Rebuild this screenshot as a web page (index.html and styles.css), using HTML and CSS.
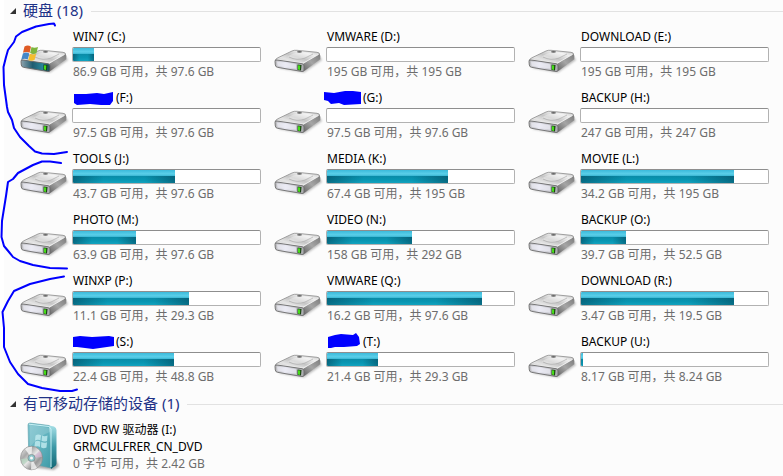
FILE: index.html
```html
<!DOCTYPE html>
<html lang="zh-CN">
<head>
<meta charset="utf-8">
<meta name="viewport" content="width=device-width, initial-scale=1">
<title>计算机</title>
<link rel="stylesheet" href="styles.css">
</head>
<body>
<svg class="defs" aria-hidden="true">
  <defs>
    <linearGradient id="top" x1="0" y1="1" x2="1" y2="0"><stop offset="0" stop-color="#b4b4b4"/><stop offset=".3" stop-color="#e4e4e4"/><stop offset=".5" stop-color="#c6c6c6"/><stop offset=".75" stop-color="#eeeeee"/><stop offset="1" stop-color="#bdbdbd"/></linearGradient>
    <linearGradient id="front" x1="0" y1="0" x2="1" y2="0"><stop offset="0" stop-color="#b8b8bb"/><stop offset=".35" stop-color="#e8e8f2"/><stop offset="1" stop-color="#a9a9ad"/></linearGradient>
    <linearGradient id="teal" x1="0" y1="0" x2="1" y2="0"><stop offset="0" stop-color="#8fa3ad"/><stop offset=".4" stop-color="#1f5c70"/><stop offset=".75" stop-color="#27869a"/><stop offset="1" stop-color="#1c4650"/></linearGradient>
    <linearGradient id="side" x1="0" y1="1" x2="1" y2="0"><stop offset="0" stop-color="#606060"/><stop offset=".5" stop-color="#a5a5a5"/><stop offset="1" stop-color="#7c7c7c"/></linearGradient>
    <linearGradient id="box" x1="0" y1="0" x2="1" y2="1"><stop offset="0" stop-color="#7fc4cf"/><stop offset=".5" stop-color="#63b4c0"/><stop offset="1" stop-color="#3e9aa6"/></linearGradient>
    <linearGradient id="spine" x1="0" y1="0" x2="0" y2="1"><stop offset="0" stop-color="#a5dfe6"/><stop offset=".5" stop-color="#3c98a6"/><stop offset="1" stop-color="#126674"/></linearGradient>
    <linearGradient id="disc" x1="0" y1="0" x2="1" y2="1"><stop offset="0" stop-color="#f4f4f4"/><stop offset=".3" stop-color="#a9a9a9"/><stop offset=".5" stop-color="#e6e6e6"/><stop offset=".7" stop-color="#989898"/><stop offset="1" stop-color="#e9e9e9"/></linearGradient>
    <filter id="soft" x="-20%" y="-50%" width="140%" height="200%"><feGaussianBlur stdDeviation="1"/></filter>
  </defs>
  <symbol id="case" viewBox="4 9 50 26">
    <path d="M8 29 34 33.500 52 21 50 18Z" fill="#777" opacity=".5" filter="url(#soft)"/>
    <path d="M5 21.500Q5.500 20 8 18.700L22 12Q24 11 27 11.300L47 13.300Q50 13.700 49.500 15.500L34 25Z" fill="url(#top)" stroke="#8c8c8c" stroke-width=".8"/>
    <path d="M34 24.500 49.700 15Q51 17 50.300 20.200L35 31.500Q33.500 32.500 32.500 32.300Z" fill="url(#side)"/>
    <path d="M18 17.500Q24 13 30 13.500L43 14.500Q37 19 31 20.500Q24 20.500 18 17.500Z" fill="#fff" opacity=".35"/>
    <path d="M19 18Q27 22 35 19L43 15" fill="none" stroke="#a2a2a2" stroke-width=".6"/>
    <ellipse cx="29.500" cy="12.800" rx="2.500" ry=".9" fill="#666"/>
    <path d="M7 20.500 33 24.200 48.500 15.500" fill="none" stroke="#f4f4f4" stroke-width=".8"/>
  </symbol>
  <symbol id="led" viewBox="4 9 50 26">
    <path d="M27.500 25.500 31.500 26 31 31.500 27.500 31Z" fill="#173b10"/>
    <path d="M28 26.200 30.300 26.400 30 30.900 28 30.500Z" fill="#45dc18"/>
  </symbol>
  <symbol id="drive" viewBox="4 9 50 26">
    <use href="#case" x="4" y="9" width="50" height="26"/>
    <path d="M5 22.500Q5 20.700 7 21L32 24.700Q34 25 34 27V31Q34 32.800 32 32.500L7.500 28.300Q5.500 28 5.300 26Z" fill="url(#front)" stroke="#6c6c6c" stroke-width=".9"/>
    <path d="M7 22.500 26 25.300 26 29.700 7.500 26.700Z" fill="#ececf5" opacity=".7"/>
    <use href="#led" x="4" y="9" width="50" height="26"/>
  </symbol>
  <symbol id="drive-win" viewBox="4 5 50 30">
    <use href="#case" x="4" y="9" width="50" height="26"/>
    <path d="M5 22.500Q5 20.700 7 21L32 24.700Q34 25 34 27V31Q34 32.800 32 32.500L7.500 28.300Q5.500 28 5.300 26Z" fill="url(#teal)" stroke="#666" stroke-width=".9"/>
    <use href="#led" x="4" y="9" width="50" height="26"/>
    <path d="M8.500 7.500Q12 5.500 15 7.700L13.600 13.800Q10.500 12.200 7 13.800Z" fill="#df5b25"/>
    <path d="M15.500 8Q18.500 9.500 22 8L20.400 14.200Q17 15.700 14.100 14.100Z" fill="#7db53b"/>
    <path d="M6.900 14.400Q10.200 12.700 13.300 14.400L11.700 20.500Q8.500 18.800 5.300 20.500Z" fill="#4387c9"/>
    <path d="M13.900 14.700Q16.900 16.200 20.200 14.800L18.500 21Q15.300 22.500 12.200 20.900Z" fill="#f4bd2e"/>
  </symbol>
  <symbol id="dvd" viewBox="0 0 40 50">
    <path d="M10 45 34 48 39 44 35 36Z" fill="#555" opacity=".5" filter="url(#soft)"/>
    <path d="M8 3Q8 1 10 1L29 3.500Q31 4 31 6L31 46 9 41Z" fill="url(#box)" stroke="#5b9ca7" stroke-width=".6"/>
    <path d="M29 3.500 34 4.500Q36.500 5.500 36.500 8V41.500Q36.500 43.500 34.500 44.500L31 47Z" fill="url(#spine)"/>
    <path d="M9 2.200 29 4.500 31 7V45" fill="none" stroke="#c8f1f5" stroke-width="1"/>
    <path d="M10 3 30 6V10Q20 13 10 25Z" fill="#fff" opacity=".15"/>
    <path d="M15.500 13.500 Q18 11.500 21 13.200L20.500 18.500Q18 17 15 18.500ZM22 13.500Q24.500 15 27.500 13.500L27 19Q24 20.200 21.500 18.800ZM15 19.700Q18 18 20.300 19.700L20 25Q17.500 23.500 14.400 25ZM21.300 20Q24 21.500 27 20.200L26.500 25.500Q23.500 27 21 25.300Z" fill="#bde9ed" opacity=".85"/>
    <ellipse cx="11.500" cy="36" rx="11" ry="11.800" fill="url(#disc)" stroke="#858585" stroke-width=".6"/>
    <path d="M11.500 36 5 27Q8 24.500 12 24.700Z" fill="#fff" opacity=".7"/>
    <path d="M11.500 36 20 29Q22 32 22 35Z" fill="#d9b6d7" opacity=".6"/>
    <path d="M11.500 36 3 43Q1.500 40 1 37Z" fill="#b6d9c2" opacity=".7"/>
    <path d="M11.500 36 17 46Q14 48 11 47.300Z" fill="#fff" opacity=".7"/>
    <circle cx="11.500" cy="36" r="3.600" fill="#8dc7cc" stroke="#777" stroke-width=".6"/>
    <circle cx="11.500" cy="36" r="1.500" fill="#f8f8f8"/>
  </symbol>
</svg>

<main class="explorer">
  <section>
    <h2 class="group"><svg class="arrow" viewBox="0 0 6 6" aria-hidden="true"><path d="M6 0V6H0Z"/></svg><span>硬盘 (18)</span></h2>
    <ul class="grid">
      <li class="item"><svg class="icon icon-win" aria-hidden="true"><use href="#drive-win"/></svg><div class="info"><p class="name">WIN7 (C:)</p><div class="bar"><div class="fill" style="width:11%"></div></div><p class="space">86.9 GB 可用，共 97.6 GB</p></div></li>
      <li class="item"><svg class="icon" aria-hidden="true"><use href="#drive"/></svg><div class="info"><p class="name">VMWARE (D:)</p><div class="bar"></div><p class="space">195 GB 可用，共 195 GB</p></div></li>
      <li class="item"><svg class="icon" aria-hidden="true"><use href="#drive"/></svg><div class="info"><p class="name">DOWNLOAD (E:)</p><div class="bar"></div><p class="space">195 GB 可用，共 195 GB</p></div></li>

      <li class="item"><svg class="icon" aria-hidden="true"><use href="#drive"/></svg><div class="info"><p class="name"><svg class="ink" viewBox="0 0 40 14" aria-hidden="true"><path d="M1 2 13 2 24 1 31 2 40 0 40 9 37 13 28 13 17 12 4 13 1 11Z"/></svg>(F:)</p><div class="bar"></div><p class="space">97.5 GB 可用，共 97.6 GB</p></div></li>
      <li class="item"><svg class="icon" aria-hidden="true"><use href="#drive"/></svg><div class="info"><p class="name"><svg class="ink ink-short" viewBox="0 0 33 14" aria-hidden="true"><path d="M-3 0 7 1 18 -1 26 -1 34 0 34 12 17 13 12 11 4 12 1 9 -3 8Z"/></svg>(G:)</p><div class="bar"></div><p class="space">97.5 GB 可用，共 97.6 GB</p></div></li>
      <li class="item"><svg class="icon" aria-hidden="true"><use href="#drive"/></svg><div class="info"><p class="name">BACKUP (H:)</p><div class="bar"></div><p class="space">247 GB 可用，共 247 GB</p></div></li>

      <li class="item"><svg class="icon" aria-hidden="true"><use href="#drive"/></svg><div class="info"><p class="name">TOOLS (J:)</p><div class="bar"><div class="fill" style="width:54.500%"></div></div><p class="space">43.7 GB 可用，共 97.6 GB</p></div></li>
      <li class="item"><svg class="icon" aria-hidden="true"><use href="#drive"/></svg><div class="info"><p class="name">MEDIA (K:)</p><div class="bar"><div class="fill" style="width:64.500%"></div></div><p class="space">67.4 GB 可用，共 195 GB</p></div></li>
      <li class="item"><svg class="icon" aria-hidden="true"><use href="#drive"/></svg><div class="info"><p class="name">MOVIE (L:)</p><div class="bar"><div class="fill" style="width:82%"></div></div><p class="space">34.2 GB 可用，共 195 GB</p></div></li>

      <li class="item"><svg class="icon" aria-hidden="true"><use href="#drive"/></svg><div class="info"><p class="name">PHOTO (M:)</p><div class="bar"><div class="fill" style="width:33.500%"></div></div><p class="space">63.9 GB 可用，共 97.6 GB</p></div></li>
      <li class="item"><svg class="icon" aria-hidden="true"><use href="#drive"/></svg><div class="info"><p class="name">VIDEO (N:)</p><div class="bar"><div class="fill" style="width:45.500%"></div></div><p class="space">158 GB 可用，共 292 GB</p></div></li>
      <li class="item"><svg class="icon" aria-hidden="true"><use href="#drive"/></svg><div class="info"><p class="name">BACKUP (O:)</p><div class="bar"><div class="fill" style="width:24%"></div></div><p class="space">39.7 GB 可用，共 52.5 GB</p></div></li>

      <li class="item"><svg class="icon" aria-hidden="true"><use href="#drive"/></svg><div class="info"><p class="name">WINXP (P:)</p><div class="bar"><div class="fill" style="width:62%"></div></div><p class="space">11.1 GB 可用，共 29.3 GB</p></div></li>
      <li class="item"><svg class="icon" aria-hidden="true"><use href="#drive"/></svg><div class="info"><p class="name">VMWARE (Q:)</p><div class="bar"><div class="fill" style="width:83%"></div></div><p class="space">16.2 GB 可用，共 97.6 GB</p></div></li>
      <li class="item"><svg class="icon" aria-hidden="true"><use href="#drive"/></svg><div class="info"><p class="name">DOWNLOAD (R:)</p><div class="bar"><div class="fill" style="width:82%"></div></div><p class="space">3.47 GB 可用，共 19.5 GB</p></div></li>

      <li class="item"><svg class="icon" aria-hidden="true"><use href="#drive"/></svg><div class="info"><p class="name"><svg class="ink" viewBox="0 0 40 14" aria-hidden="true"><path d="M0 1 7 0 19 1 36 0 41 1 41 10 34 11 20 13 4 11 0 11Z"/></svg>(S:)</p><div class="bar"><div class="fill" style="width:54%"></div></div><p class="space">22.4 GB 可用，共 48.8 GB</p></div></li>
      <li class="item"><svg class="icon" aria-hidden="true"><use href="#drive"/></svg><div class="info"><p class="name"><svg class="ink ink-short" viewBox="0 0 33 14" aria-hidden="true"><path d="M1 1 8 -1 14 -2 26 -1 29 -3 32 1 33 8 30 10 17 11 8 11 4 12 1 12Z"/></svg>(T:)</p><div class="bar"><div class="fill" style="width:27.500%"></div></div><p class="space">21.4 GB 可用，共 29.3 GB</p></div></li>
      <li class="item"><svg class="icon" aria-hidden="true"><use href="#drive"/></svg><div class="info"><p class="name">BACKUP (U:)</p><div class="bar"><div class="fill" style="width:1%"></div></div><p class="space">8.17 GB 可用，共 8.24 GB</p></div></li>
    </ul>
  </section>

  <section>
    <h2 class="group"><svg class="arrow" viewBox="0 0 6 6" aria-hidden="true"><path d="M6 0V6H0Z"/></svg><span>有可移动存储的设备 (1)</span></h2>
    <ul class="grid">
      <li class="item"><svg class="icon icon-dvd" aria-hidden="true"><use href="#dvd"/></svg><div class="info"><p class="name">DVD RW 驱动器 (I:)</p><p class="name">GRMCULFRER_CN_DVD</p><p class="space">0 字节 可用，共 2.42 GB</p></div></li>
    </ul>
  </section>

  <svg class="pen" viewBox="0 0 80 400" aria-hidden="true">
    <path d="M55 25.500 54 23.500 49 24 36 26.500 22 32 16 36.500 14 42 8 50 6 57 3.500 67 4 85 7 107 8 112 12 120 14 128 20 137 29 146 35 151.500 42 153.500 54 154 67 152"/>
    <path d="M61 163 50 161.500 42 161.500 33 165 18 173 13 179 8 182 6 196 2 221 1.500 237 4 246 9 252 13 257 20 261 33 265 50 268 67 268.500"/>
    <path d="M64 276.500 50 279 30 284 14 291 8 301 2.500 312 4 328 4 347 10 362 18 374 28 384 42 388 60 391 72 391 77 389.500"/>
  </svg>
</main>
</body>
</html>
```

FILE: styles.css
```css
* {
  box-sizing: border-box;
}

body,
h2,
p,
ul {
  margin: 0;
  padding: 0;
}

body {
  background: #fcfcfc;
  color: #000;
  font: 12px/17px "Noto Sans", "Noto Sans CJK SC", sans-serif;
}

.defs {
  position: absolute;
  width: 0;
  height: 0;
}

.explorer {
  position: relative;
  min-height: 100vh;
  border-left: 4px solid #fff;
}

.group {
  display: flex;
  align-items: center;
  height: 22px;
  padding-left: 6px;
  color: #1e3287;
  font-size: 15px;
  font-weight: 400;
  line-height: 20px;
}

.group span {
  padding-bottom: 2px;
}

.group::after {
  content: "";
  flex: 1;
  height: 1px;
  margin-left: 8px;
  background: #e2e2e2;
}

.arrow {
  width: 6px;
  height: 6px;
  margin-right: 7px;
  fill: #333;
}

.grid {
  display: grid;
  grid-template-columns: repeat(3, 1fr);
  row-gap: 9px;
  padding: 6px 1px 8px 16px;
  list-style: none;
}

.item {
  display: flex;
}

.icon {
  flex: none;
  width: 50px;
  height: 26px;
  margin: 20px 2px 0 0;
}

.icon-win {
  height: 30px;
  margin-top: 16px;
}

.icon-dvd {
  width: 40px;
  height: 50px;
  margin: 1px 12px 0 0;
}

.info {
  flex: 1;
  min-width: 0;
  padding-right: 13px;
}

.name,
.space {
  height: 17px;
  padding-left: 1px;
  white-space: nowrap;
}

.space {
  color: #6d6d6d;
}

.ink {
  width: 40px;
  height: 14px;
  margin-right: 3px;
  overflow: visible;
  vertical-align: middle;
  fill: #00f;
}

.ink-short {
  width: 33px;
}

.bar {
  height: 15px;
  margin: 2px 0 1px;
  border: 1px solid #b2b2b2;
  border-top-color: #8e8e8e;
  border-radius: 2px;
  background: #fff;
  overflow: hidden;
}

.fill {
  height: 100%;
  background:
    linear-gradient(90deg, rgba(0, 50, 70, 0.45), transparent 30%, transparent 70%, rgba(0, 50, 70, 0.45)) 0 100% / 100% 54% no-repeat,
    linear-gradient(#3bbadb, #5bcfe9 30%, #38b5d2 46%, #0a8ba7 46%, #0896b2 75%, #12a3bf);
}

.pen {
  position: absolute;
  top: 0;
  left: -4px;
  width: 80px;
  height: 400px;
  fill: none;
  stroke: #00f;
  stroke-width: 2;
  stroke-linecap: round;
  stroke-linejoin: round;
}
```
